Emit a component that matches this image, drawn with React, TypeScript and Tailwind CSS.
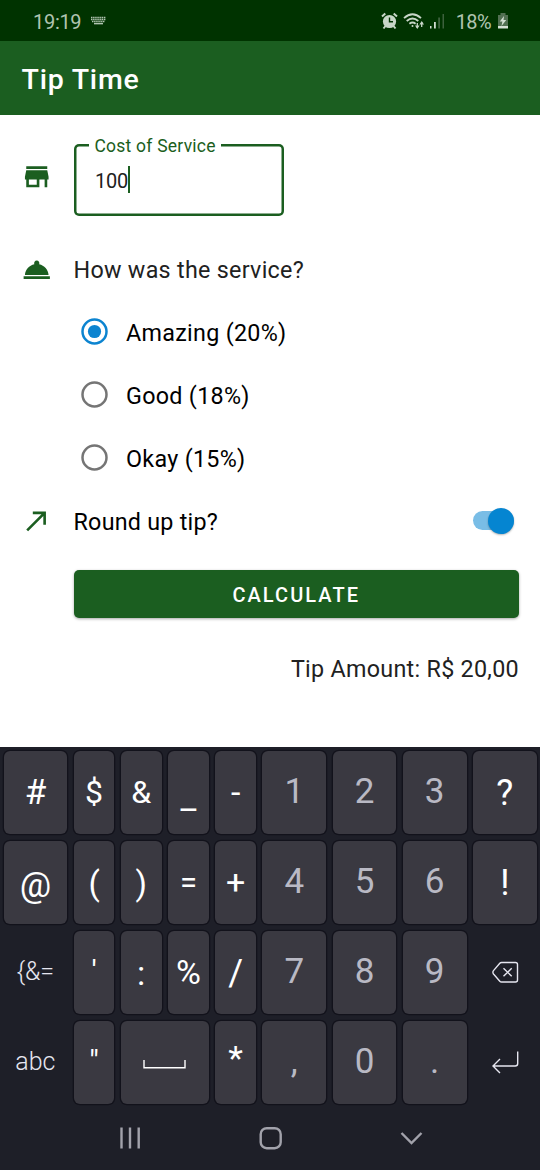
import { MdCallMade, MdRoomService, MdStore } from "react-icons/md";

type KeyDef = {
  label: string;
  size: string;
  shift?: string;
  tone?: "symbol" | "digit" | "plain";
  wide?: boolean;
  icon?: "space" | "backspace" | "enter";
};

const sym = (label: string, size = "text-[33px]", shift = "pt-0"): KeyDef => ({ label, size, shift, tone: "symbol" });
const digit = (label: string): KeyDef => ({ label, size: "text-[35px]", shift: "pb-[2px]", tone: "digit" });

const rows: KeyDef[][] = [
  [sym("#", "text-[35px]"), sym("$", "text-[32px]", "pb-[2px]"), sym("&", "text-[32px]", "pb-[2px]"), sym("_", "text-[35px]", "pt-[8px]"), sym("-", "text-[34px]", "pb-[2px]"), digit("1"), digit("2"), digit("3"), sym("?", "text-[36px]")],
  [sym("@", "text-[35px]", "pt-[5px]"), sym("(", "text-[33px]", "pt-[2px]"), sym(")", "text-[33px]", "pt-[2px]"), sym("=", "text-[31px]"), sym("+", "text-[34px]", "pb-[2px]"), digit("4"), digit("5"), digit("6"), sym("!", "text-[36px]")],
  [{ label: "{&=", size: "text-[25px]", shift: "pb-[2px]", tone: "plain" }, sym("'", "text-[30px]", "pb-[4px]"), sym(":", "text-[34px]"), sym("%", "text-[34px]", "pb-[2px]"), sym("/", "text-[36px]"), digit("7"), digit("8"), digit("9"), { label: "", size: "", icon: "backspace", tone: "plain" }],
  [{ label: "abc", size: "text-[25px]", shift: "pb-[2px]", tone: "plain" }, sym('"', "text-[30px]", "pb-[4px]"), { label: "", size: "", icon: "space", tone: "symbol", wide: true }, sym("*", "text-[34px]", "pb-[9px]"), digit(","), digit("0"), digit("."), { label: "", size: "", icon: "enter", tone: "plain" }],
];

const tones = {
  symbol: "bg-[#3a3941] text-white font-[450] shadow-[0_0_0_1.3px_#12121b]",
  digit: "bg-[#3a3941] text-[#b9b9c4] font-normal shadow-[0_0_0_1.3px_#12121b]",
  plain: "text-[#e6e6f0] font-[350]",
};

function KeyIcon({ name }: { name: "space" | "backspace" | "enter" }) {
  if (name === "space")
    return (
      <svg className="mt-[3px] h-[9px] w-[43px]" viewBox="0 0 43 9" fill="none" stroke="#fff" strokeWidth="1.4">
        <path d="M1 0v7.8h41V0" />
      </svg>
    );
  if (name === "backspace")
    return (
      <svg className="h-[24px] w-[30px]" viewBox="0 0 30 24" fill="none" stroke="#e6e6f0" strokeWidth="1.4" strokeLinejoin="round">
        <path d="M11.500 1.500h14a2 2 0 0 1 2 2v15.500a2 2 0 0 1-2 2h-14q-1 0-1.700-.8l-6.300-7.200q-1.200-1.800 0-3.400l6.300-7.300q.7-.8 1.700-.8Z" />
        <path d="m13.500 7.300 8.200 8M21.700 7.300l-8.200 8" />
      </svg>
    );
  return (
    <svg className="h-[24px] w-[30px]" viewBox="0 0 30 24" fill="none" stroke="#e6e6f0" strokeWidth="1.400">
      <path d="M27.700.500v12q0 2.500-2.500 2.500H3M10 8l-7 7 7 7" />
    </svg>
  );
}

function Key({ k }: { k: KeyDef }) {
  return (
    <div
      className={`flex h-[83px] items-center justify-center rounded-[6px] leading-none ${tones[k.tone ?? "symbol"]} ${k.size} ${k.shift ?? ""} ${k.wide ? "col-span-2" : ""}`}
    >
      {k.icon ? <KeyIcon name={k.icon} /> : <span>{k.label}</span>}
    </div>
  );
}

function StatusBar() {
  return (
    <header className="flex h-[41px] items-center bg-[#003300] pr-[31px] pl-[33px] text-[#b0c4b0]">
      <span className="pt-[2px] text-[20px] tracking-[-0.300px]">19:19</span>
      <svg className="ml-[10px] h-[9px] w-[15px]" viewBox="0 0 15 9" fill="none" stroke="currentColor">
        <path d="M0 1.500h15M0 3.500h15M1 5.500h13" strokeWidth="1.400" strokeDasharray="1.500 .6" />
        <path d="M3 7.600h9" strokeWidth="1.500" />
      </svg>
      <div className="ml-auto flex items-center">
        <svg className="h-[18px] w-[17px]" viewBox="0 0 17 18">
          <circle cx="8.500" cy="9.500" r="6.600" fill="#c8d6c8" />
          <path d="M1 4.500 4.300 1.500M16 4.500 12.700 1.500M4.500 14 2.500 16.500M12.500 14l2 2.500" stroke="#c8d6c8" strokeWidth="2" />
          <path d="M8.500 5.500v4.300H12" fill="none" stroke="#003300" strokeWidth="1.400" />
        </svg>
        <svg className="ml-[5px] h-[18px] w-[22px]" viewBox="0 0 22 18" fill="none" stroke="#c8d6c8" strokeWidth="1.800">
          <path d="M1 6.200q8.500-7.800 17 0M3.700 9q5.800-5 11.600 0M6.400 11.700q3.100-2.400 6.200 0" />
          <circle cx="9.500" cy="14" r="1" fill="#c8d6c8" stroke="none" />
          <path d="M14.300 11v5M18.700 15v-5" strokeWidth="1.300" />
          <path d="M12 13.500h4.600L14.300 17zM16.400 12.500H21L18.700 9z" fill="#c8d6c8" stroke="none" />
        </svg>
        <svg className="ml-[5px] h-[16px] w-[15px]" viewBox="0 0 15 16">
          <path d="M0 13h1.500v2.500H0zM4 9h1.800v6.500H4z" fill="#d0dcd0" />
          <path d="M8.200 4.500H10v11H8.200zM12.500 1h1.500v14.500h-1.500z" fill="#3d613d" />
        </svg>
        <span className="ml-[11px] pt-[2px] text-[20px] tracking-[-0.600px]">18%</span>
        <svg className="ml-[6px] h-[18px] w-[12px]" viewBox="0 0 12 18">
          <path d="M3.500 1h5v2H11v13H1V3h2.500z" fill="#527052" />
          <path d="M1 14h10v2.500H1z" fill="#d5e0d5" />
          <path d="M7 4 2.800 9.500h2.600L4.500 14l4.700-6H6.500z" fill="#d5e0d5" />
        </svg>
      </div>
    </header>
  );
}

function Radio({ label, checked }: { label: string; checked?: boolean }) {
  return (
    <label className="flex h-[63px] items-center pl-[60px]">
      <svg className={`size-[27px] ${checked ? "text-[#0c84d0]" : "text-[#757575]"}`} viewBox="0 0 27 27">
        <circle cx="13.500" cy="13.500" r="12" fill="none" stroke="currentColor" strokeWidth="2.500" />
        {checked && <circle cx="13.500" cy="13.500" r="6.600" fill="currentColor" />}
      </svg>
      <span className="pt-[4px] pl-[18px] text-[23.300px] tracking-[0.300px] text-black">{label}</span>
    </label>
  );
}

export default function App() {
  return (
    <div className="flex h-[1170px] w-[540px] flex-col overflow-hidden bg-white font-['Roboto',sans-serif]">
      <StatusBar />
      <div className="flex h-[74px] items-center bg-[#1b5e20] pt-[4px] pl-[21.500px] text-[28.500px] font-medium tracking-[0.780px] text-white">Tip Time</div>
      <main className="h-[632px] pt-[29px] pr-[21px] pl-[21px]">
        <div className="flex h-[71.500px] items-start">
          <MdStore className="mt-[16.500px] mr-[21px] size-[31.500px] text-[#1b5e20]" />
          <div className="relative flex h-full w-[210px] items-center rounded-[5px] pl-[21.500px] shadow-[inset_0_0_0_2.5px_#1b5e20]">
            <span className="absolute -top-[9px] left-[15.500px] bg-white px-[5.500px] text-[17.500px] leading-[22px] tracking-[0.230px] whitespace-nowrap text-[#1b5e20]">Cost of Service</span>
            <span className="pt-[2px] text-[20px] tracking-[-0.200px] text-[#212121]">100</span>
            <span className="h-[27px] w-[2px] bg-[#1b5e20]" />
          </div>
        </div>
        <div className="mt-[30.500px] flex h-[47px] items-center">
          <MdRoomService className="mr-[21px] size-[31.500px] text-[#1b5e20]" />
          <span className="pt-[2px] text-[23.300px] tracking-[0.290px] text-[#212121]">How was the service?</span>
        </div>
        <div className="pt-[7px]">
          <Radio label="Amazing (20%)" checked />
          <Radio label="Good (18%)" />
          <Radio label="Okay (15%)" />
        </div>
        <div className="flex h-[63px] items-center">
          <MdCallMade className="mr-[21px] size-[31.500px] text-[#1b5e20]" />
          <span className="pt-[4px] text-[23.300px] tracking-[0.250px] text-black">Round up tip?</span>
          <span className="mr-[5px] ml-auto flex h-[19px] w-[41px] items-center justify-end rounded-full bg-[#79bde6]">
            <span className="size-[26px] shrink-0 rounded-full bg-[#0585d1] shadow-[0_1px_2px_rgba(0,0,0,0.3)]" />
          </span>
        </div>
        <button className="mt-[18px] ml-[52.500px] flex h-[48px] w-[445.500px] items-center justify-center rounded-[5px] bg-[#1b5e20] pt-[1px] text-[20px] font-medium tracking-[2.050px] text-white shadow-[0_1px_3px_rgba(0,0,0,0.35)]">CALCULATE</button>
        <div className="mt-[35px] text-right text-[23.300px] leading-[32px] tracking-[0.290px] text-[#212121]">Tip Amount: R$ 20,00</div>
      </main>
      <section className="flex flex-1 flex-col bg-[#1e1f28] pt-[4px]">
        <div className="flex flex-col gap-[7px] pl-[3.700px]">
          {rows.map((row, i) => (
            <div key={i} className="grid grid-cols-[63.500px_repeat(4,40.700px)_repeat(4,63.700px)] gap-[6.500px]">
              {row.map((k, j) => (
                <Key key={j} k={k} />
              ))}
            </div>
          ))}
        </div>
        <nav className="flex flex-1 items-center pt-[2px] pl-[119px]">
          <svg className="h-[24px] w-[306px]" viewBox="0 0 306 24" fill="none" stroke="#a2a2ab" strokeWidth="2.400">
            <path d="M2.500 1.500v21M11 1.500v21M19.700 1.500v21" />
            <rect x="141.700" y="2.200" width="20" height="20" rx="6" />
            <path d="m282.500 7 10 10 10-10" />
          </svg>
        </nav>
      </section>
    </div>
  );
}
